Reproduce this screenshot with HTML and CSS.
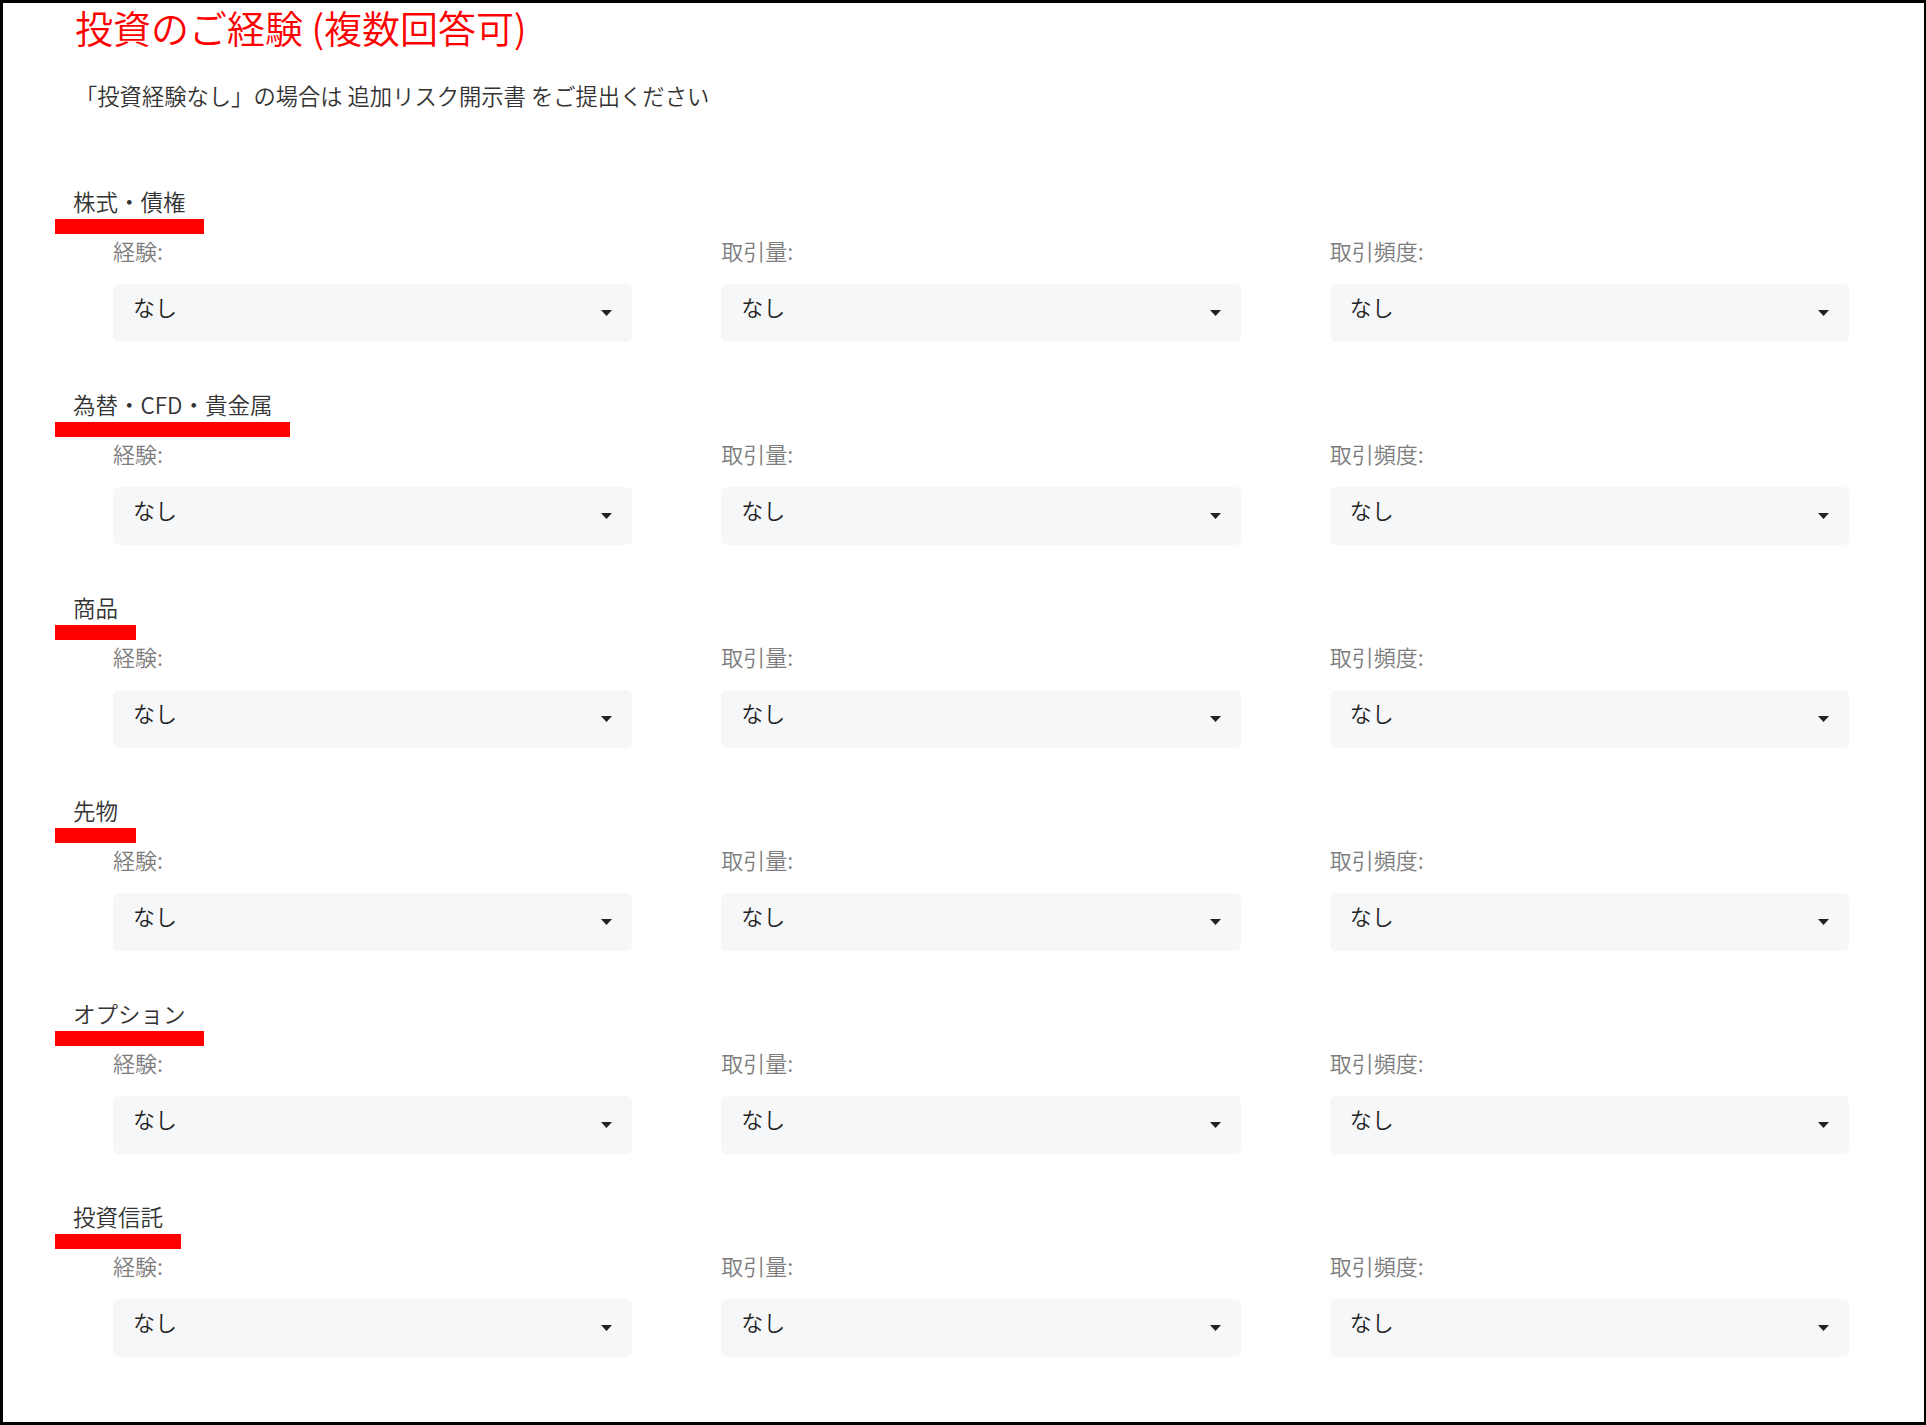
FILE: index.html
```html
<!DOCTYPE html>
<html lang="ja">
<head>
<meta charset="utf-8">
<title>投資のご経験</title>
<link rel="stylesheet" href="styles.css">
</head>
<body>
<div class="page">
  <h1 class="title">投資のご経験 (複数回答可)</h1>
  <p class="note">「投資経験なし」の場合は 追加リスク開示書 をご提出ください</p>

  <div class="sections">
    <section class="section">
      <div class="section-label">株式・債権</div>
      <div class="fields">
        <div class="field"><div class="field-label">経験:</div><div class="select"><span class="value">なし</span><svg class="caret" width="11" height="6" viewBox="0 0 11 6"><polygon points="0,0 11,0 5.5,6"/></svg></div></div>
        <div class="field"><div class="field-label">取引量:</div><div class="select"><span class="value">なし</span><svg class="caret" width="11" height="6" viewBox="0 0 11 6"><polygon points="0,0 11,0 5.5,6"/></svg></div></div>
        <div class="field"><div class="field-label">取引頻度:</div><div class="select"><span class="value">なし</span><svg class="caret" width="11" height="6" viewBox="0 0 11 6"><polygon points="0,0 11,0 5.5,6"/></svg></div></div>
      </div>
    </section>

    <section class="section">
      <div class="section-label">為替・CFD・貴金属</div>
      <div class="fields">
        <div class="field"><div class="field-label">経験:</div><div class="select"><span class="value">なし</span><svg class="caret" width="11" height="6" viewBox="0 0 11 6"><polygon points="0,0 11,0 5.5,6"/></svg></div></div>
        <div class="field"><div class="field-label">取引量:</div><div class="select"><span class="value">なし</span><svg class="caret" width="11" height="6" viewBox="0 0 11 6"><polygon points="0,0 11,0 5.5,6"/></svg></div></div>
        <div class="field"><div class="field-label">取引頻度:</div><div class="select"><span class="value">なし</span><svg class="caret" width="11" height="6" viewBox="0 0 11 6"><polygon points="0,0 11,0 5.5,6"/></svg></div></div>
      </div>
    </section>

    <section class="section">
      <div class="section-label">商品</div>
      <div class="fields">
        <div class="field"><div class="field-label">経験:</div><div class="select"><span class="value">なし</span><svg class="caret" width="11" height="6" viewBox="0 0 11 6"><polygon points="0,0 11,0 5.5,6"/></svg></div></div>
        <div class="field"><div class="field-label">取引量:</div><div class="select"><span class="value">なし</span><svg class="caret" width="11" height="6" viewBox="0 0 11 6"><polygon points="0,0 11,0 5.5,6"/></svg></div></div>
        <div class="field"><div class="field-label">取引頻度:</div><div class="select"><span class="value">なし</span><svg class="caret" width="11" height="6" viewBox="0 0 11 6"><polygon points="0,0 11,0 5.5,6"/></svg></div></div>
      </div>
    </section>

    <section class="section">
      <div class="section-label">先物</div>
      <div class="fields">
        <div class="field"><div class="field-label">経験:</div><div class="select"><span class="value">なし</span><svg class="caret" width="11" height="6" viewBox="0 0 11 6"><polygon points="0,0 11,0 5.5,6"/></svg></div></div>
        <div class="field"><div class="field-label">取引量:</div><div class="select"><span class="value">なし</span><svg class="caret" width="11" height="6" viewBox="0 0 11 6"><polygon points="0,0 11,0 5.5,6"/></svg></div></div>
        <div class="field"><div class="field-label">取引頻度:</div><div class="select"><span class="value">なし</span><svg class="caret" width="11" height="6" viewBox="0 0 11 6"><polygon points="0,0 11,0 5.5,6"/></svg></div></div>
      </div>
    </section>

    <section class="section">
      <div class="section-label">オプション</div>
      <div class="fields">
        <div class="field"><div class="field-label">経験:</div><div class="select"><span class="value">なし</span><svg class="caret" width="11" height="6" viewBox="0 0 11 6"><polygon points="0,0 11,0 5.5,6"/></svg></div></div>
        <div class="field"><div class="field-label">取引量:</div><div class="select"><span class="value">なし</span><svg class="caret" width="11" height="6" viewBox="0 0 11 6"><polygon points="0,0 11,0 5.5,6"/></svg></div></div>
        <div class="field"><div class="field-label">取引頻度:</div><div class="select"><span class="value">なし</span><svg class="caret" width="11" height="6" viewBox="0 0 11 6"><polygon points="0,0 11,0 5.5,6"/></svg></div></div>
      </div>
    </section>

    <section class="section">
      <div class="section-label">投資信託</div>
      <div class="fields">
        <div class="field"><div class="field-label">経験:</div><div class="select"><span class="value">なし</span><svg class="caret" width="11" height="6" viewBox="0 0 11 6"><polygon points="0,0 11,0 5.5,6"/></svg></div></div>
        <div class="field"><div class="field-label">取引量:</div><div class="select"><span class="value">なし</span><svg class="caret" width="11" height="6" viewBox="0 0 11 6"><polygon points="0,0 11,0 5.5,6"/></svg></div></div>
        <div class="field"><div class="field-label">取引頻度:</div><div class="select"><span class="value">なし</span><svg class="caret" width="11" height="6" viewBox="0 0 11 6"><polygon points="0,0 11,0 5.5,6"/></svg></div></div>
      </div>
    </section>
  </div>
</div>
</body>
</html>
```

FILE: styles.css
```css
* {
  box-sizing: border-box;
}

html,
body {
  margin: 0;
  padding: 0;
  background: #ffffff;
}

body {
  font-family: "Noto Sans CJK JP", "Noto Sans", sans-serif;
  font-weight: 350;
  color: #333333;
}

.page {
  width: 1926px;
  height: 1425px;
  border: 3px solid #000000;
  border-right-width: 2px;
  padding: 1px 0 0 52px;
  overflow: hidden;
}

.title {
  margin: 0 0 0 20px;
  font-size: 38px;
  line-height: 46px;
  font-weight: 350;
  color: #ff0000;
}

.note {
  margin: 30px 0 0 20px;
  font-size: 22.3px;
  line-height: 30px;
  color: #333333;
}

.sections {
  margin-top: 76px;
  display: flex;
  flex-direction: column;
  gap: 47px;
}

.section-label {
  display: inline-block;
  padding: 0 18px 3px;
  border-bottom: 15px solid #ff0000;
  font-size: 22.5px;
  line-height: 30px;
  color: #333333;
}

.fields {
  margin: 3px 0 0 58px;
  width: 1736px;
  display: grid;
  grid-template-columns: repeat(3, 1fr);
  column-gap: 89px;
}

.field-label {
  font-size: 22px;
  line-height: 30px;
  color: #7d7d7d;
  margin-top: -2px;
}

.select {
  margin-top: 19px;
  height: 58px;
  padding: 7px 20px 0 20px;
  background: #f6f7f9;
  border-radius: 6px;
  display: flex;
  justify-content: space-between;
  align-items: flex-start;
}

.value {
  font-size: 22px;
  line-height: 30px;
  color: #222222;
}

.caret {
  align-self: center;
  margin-top: -7px;
  fill: #222222;
}
```
